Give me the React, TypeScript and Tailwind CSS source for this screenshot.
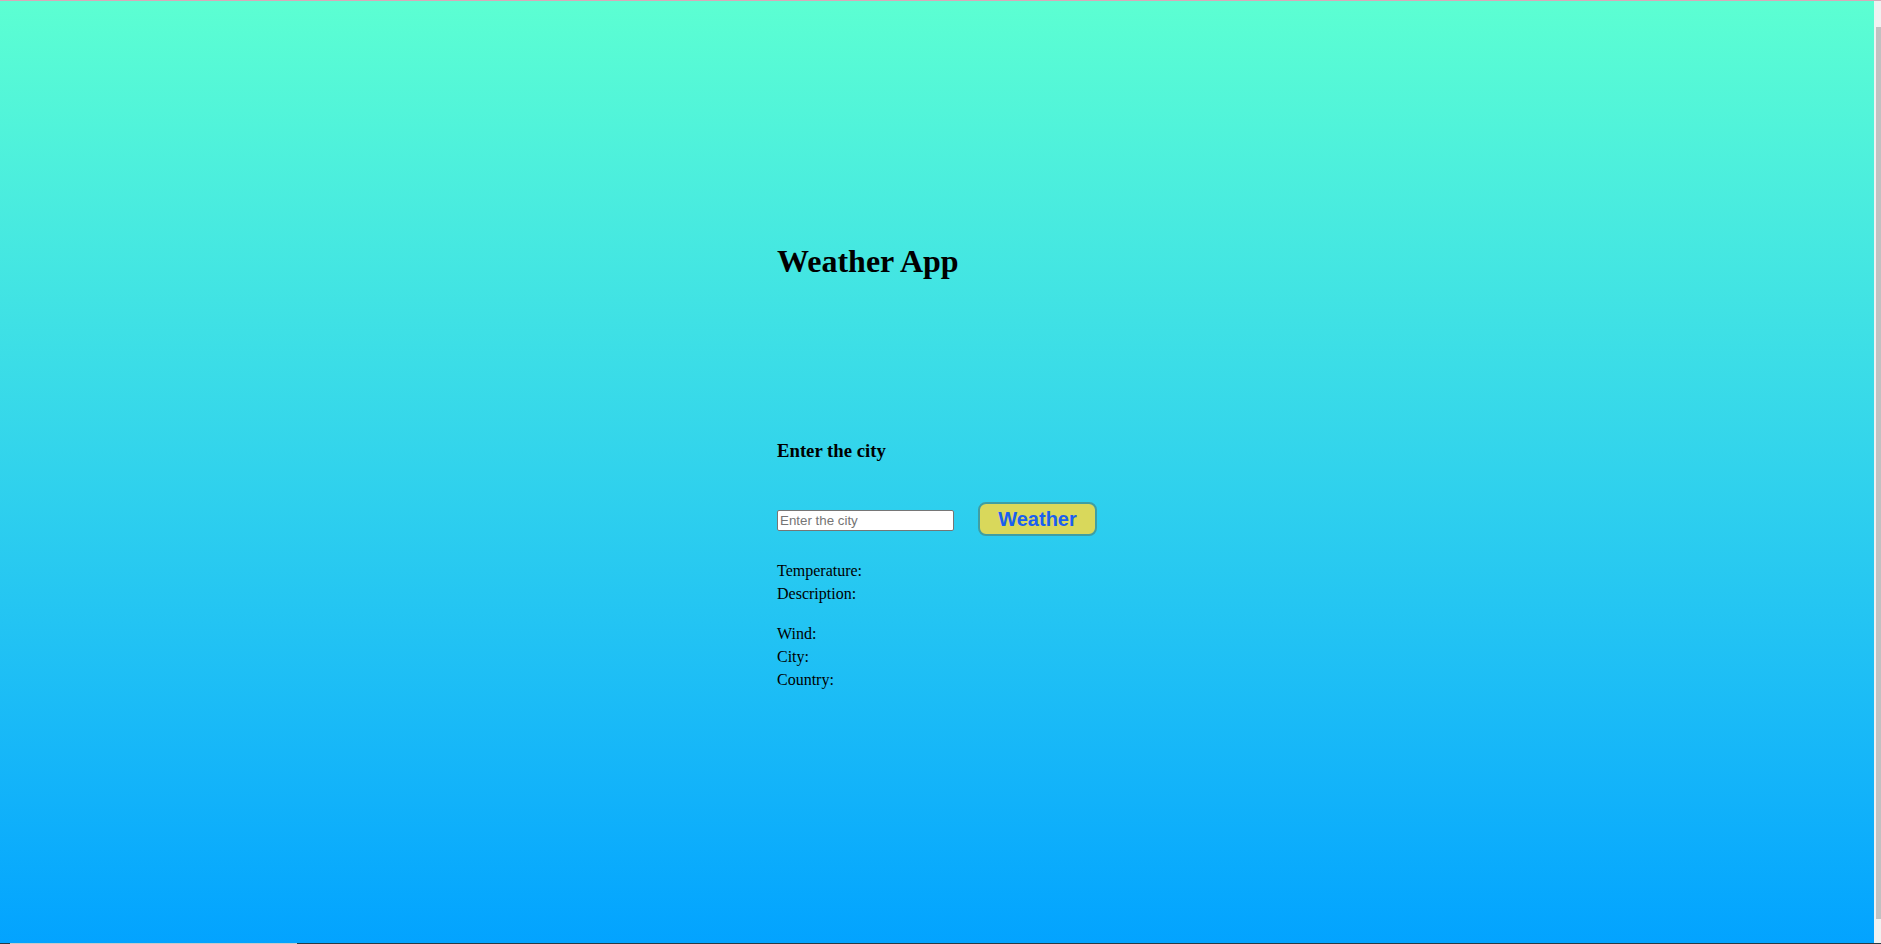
import React from "react";

export default function App() {
  const serif = { fontFamily: '"Liberation Serif", "Times New Roman", serif' };
  return (
    <div className="w-[1881px] h-[944px] flex flex-col overflow-hidden">
      <div className="h-px w-full bg-[#d8aab9]" />
      <div className="flex flex-1 min-h-0">
        <div
          className="flex-1 bg-gradient-to-b from-[#5cffd2] to-[#03a3ff] text-black"
          style={serif}
        >
          <div className="w-[320px] mx-auto pt-[242px]">
            <h1 className="text-[32px] leading-[36px] font-bold">Weather App</h1>
            <h3 className="mt-[161px] text-[18.72px] leading-[22px] font-bold">Enter the city</h3>
            <div className="mt-[40px] flex items-start gap-[24px]">
              <input
                type="text"
                placeholder="Enter the city"
                className="mt-[8px] w-[177px] h-[21px] bg-white border border-[#767676] rounded-[2px] px-[2px] text-[13.33px] text-black placeholder:text-[#757575] outline-none"
                style={{ fontFamily: '"Liberation Sans", Arial, sans-serif' }}
              />
              <button
                className="w-[119px] h-[34px] bg-[#d9d85b] border-2 border-[#3f9ea3] rounded-[8px] text-[#1a5ff0] text-[20px] font-bold leading-none flex items-center justify-center"
                style={{ fontFamily: '"Liberation Sans", Arial, sans-serif' }}
              >
                Weather
              </button>
            </div>
            <div className="mt-[23px] text-[16px] leading-[23px]">
              <div>Temperature:</div>
              <div>Description:</div>
              <div className="mt-[17px]">Wind:</div>
              <div>City:</div>
              <div>Country:</div>
            </div>
          </div>
        </div>
        <div className="w-[7px] bg-[#f1f1f1] flex flex-col pt-[26px] pb-[24px] pl-[2px]">
          <div className="flex-1 bg-[#c1c1c1]" />
        </div>
      </div>
      <div className="h-px w-full bg-[#2b3a42] flex">
        <div className="ml-[10px] w-[287px] h-px bg-[#c8c8c8]" />
      </div>
    </div>
  );
}
